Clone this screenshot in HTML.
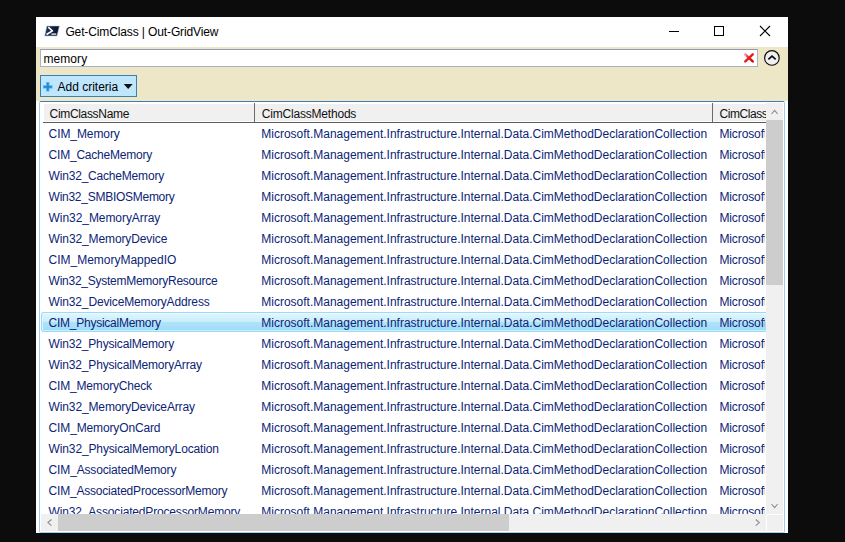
<!DOCTYPE html><html><head><meta charset="utf-8"><title>Get-CimClass | Out-GridView</title><style>
*{margin:0;padding:0;box-sizing:border-box}
html,body{width:845px;height:542px;overflow:hidden;background:#0c0c0c}
body{position:relative;font-family:"Liberation Sans",sans-serif;font-size:12px;color:#000}
.abs{position:absolute}
#win{left:36px;top:17px;width:752px;height:516px;background:#fff}
#title{left:29.4px;top:7px;height:16px;line-height:16px;font-size:12px;white-space:nowrap;color:#000}
#beige{left:0;top:30px;width:752px;height:54px;background:#ede7c7}
#search{left:4px;top:32px;width:718px;height:18px;background:#fff;border:1px solid #aeb3c6;border-top-color:#939bb4;border-bottom-color:#aab0c4}
#search span{position:absolute;left:2.4px;top:1px;line-height:16px;white-space:nowrap}
#addbtn{left:4px;top:58px;width:97px;height:22px;background:#bee6fd;border:1px solid #3c7fb1}
#addbtn span{position:absolute;left:16.5px;top:1px;line-height:20px;white-space:nowrap}
#lv{left:3px;top:84px;width:746px;height:432px;background:#fff;border:1px solid #a3cdee;border-top-color:#3f7db5;border-radius:2px;overflow:hidden}
#hdr{left:4px;top:2px;width:722px;height:17px;background:#f0f0f0}
#hline{left:3px;top:20px;width:723px;height:1px;background:#5d5d5d}
.sep{position:absolute;top:1px;width:1px;height:19px;background:#6b6b6b}
.ht{position:absolute;top:3px;line-height:19px;white-space:nowrap;color:#111}
.r{position:absolute;left:0;width:726px;overflow:hidden;height:21px;line-height:21px;white-space:nowrap;color:#0c2475}
.r span{position:absolute;top:1px}
.c1{left:8.6px}.c2{left:221.3px}.c3{left:679.4px;width:46px;overflow:hidden}
#clip{left:0;top:0;width:726px;height:412px;overflow:hidden}
#sel{left:1px;top:210px;width:800px;height:20px;border:1px solid #99dbf9;border-radius:2px;background:linear-gradient(#e2f6fe 0%,#c9edfc 50%,#b1e3fa 50%,#9ddbf9 100%);box-shadow:inset 0 1px 0 #ebfaff,inset 0 -1px 0 #cdeefb,inset 1px 0 0 #dcf4fd,inset -1px 0 0 #dcf4fd}
#vs{left:726px;top:1px;width:17px;height:411px;background:#f0f0f0}
#vthumb{left:726px;top:18px;width:17px;height:165px;background:#cdcdcd}
#hs{left:1px;top:412px;width:725px;height:17px;background:#f0f0f0}
#hthumb{left:18px;top:412px;width:451px;height:17px;background:#cdcdcd}
#corner{left:727px;top:413px;width:16px;height:16px;background:#f0f0f0}
svg{position:absolute;overflow:visible}
</style></head><body>
<div id="win" class="abs">
<svg style="left:8px;top:9px" width="16" height="10" viewBox="0 0 16 10"><defs><linearGradient id="psg" x1="0" y1="0" x2="1" y2="0"><stop offset="0" stop-color="#1f3558"/><stop offset="0.55" stop-color="#14223c"/><stop offset="1" stop-color="#0a1424"/></linearGradient></defs><polygon points="2.87,-0.05 15.4,-0.05 13.04,9.98 0.65,9.98" fill="url(#psg)" stroke="#bccdf0" stroke-opacity="0.8" stroke-width="0.7"/><polyline points="4.3,1.2 8.3,4.8 2.5,8.5" fill="none" stroke="#fff" stroke-width="1.6"/><line x1="7.4" y1="8.1" x2="12.3" y2="8.1" stroke="#fff" stroke-width="1.25"/></svg>
<div id="title" class="abs"><span id="t_title" style="letter-spacing:-0.121px">Get-CimClass | Out-GridView</span></div>
<svg style="left:633px;top:14px" width="11" height="1"><rect width="10" height="1" fill="#000"/></svg>
<svg style="left:678px;top:9px" width="10" height="10"><rect x="0.5" y="0.5" width="9" height="9" fill="none" stroke="#000" stroke-width="1"/></svg>
<svg style="left:724px;top:9px" width="10" height="10"><path d="M0,0 L10,10 M10,0 L0,10" stroke="#000" stroke-width="1.1" fill="none"/></svg>
<div id="beige" class="abs"></div>
<div id="search" class="abs"><span id="t_search" style="letter-spacing:0.093px">memory</span></div>
<svg style="left:707.8px;top:35.9px" width="10" height="10" viewBox="0 0 10 10"><defs><linearGradient id="rx" x1="0" y1="0" x2="1" y2="1"><stop offset="0" stop-color="#f19a9a"/><stop offset="0.45" stop-color="#e82020"/><stop offset="1" stop-color="#e00505"/></linearGradient></defs><path d="M1.3,1.3 L8.7,8.4 M8.7,1.3 L1.3,8.4" stroke="url(#rx)" stroke-width="2.5" fill="none" stroke-linecap="round"/></svg>
<svg style="left:728px;top:33px" width="16" height="16" viewBox="0 0 16 16"><circle cx="7.9" cy="7.9" r="7.3" fill="#efefef" stroke="#0a0a0a" stroke-width="1.15"/><polyline points="4.4,9.4 8,6.1 11.7,9.4" fill="none" stroke="#0a0a0a" stroke-width="1.65"/></svg>
<div id="addbtn" class="abs"><svg style="left:1.7px;top:5.7px" width="9.6" height="9.6" viewBox="0 0 9.6 9.6"><path d="M4.8,0.1 V9.5 M0.1,4.8 H9.5" stroke="#56b0ec" stroke-width="3.2" fill="none"/><path d="M4.8,0.9 V8.7 M0.9,4.8 H8.7" stroke="#2487d6" stroke-width="1.7" fill="none"/></svg><span id="t_add" style="letter-spacing:-0.000px">Add criteria</span><svg style="left:82.2px;top:7.9px" width="10.4" height="5.4" viewBox="0 0 10 6"><polygon points="0,0 10,0 5,5.5" fill="#111"/></svg></div>
<div id="lv" class="abs">
<div id="hdr" class="abs"></div><div id="hline" class="abs"></div>
<div class="sep" style="left:214px"></div><div class="sep" style="left:672px"></div>
<div id="clip" class="abs">
<span class="ht" id="h1" style="left:9.6px;letter-spacing:-0.329px">CimClassName</span>
<span class="ht" id="h2" style="left:221.7px;letter-spacing:-0.191px">CimClassMethods</span>
<span class="ht" id="h3" style="left:679.6px;letter-spacing:-0.450px">CimClassProperties</span>
<div id="sel" class="abs"></div>
<div class="r" style="top:21px"><span class="c1" id="n0" style="letter-spacing:-0.082px">CIM_Memory</span><span class="c2 m" style="letter-spacing:-0.005px">Microsoft.Management.Infrastructure.Internal.Data.CimMethodDeclarationCollection</span><span class="c3 p" style="letter-spacing:-0.100px">Microsoft.Management.Infrastructure.Internal.Data.CimPropertyDeclarationCollection</span></div>
<div class="r" style="top:42px"><span class="c1" id="n1" style="letter-spacing:-0.214px">CIM_CacheMemory</span><span class="c2 m" style="letter-spacing:-0.005px">Microsoft.Management.Infrastructure.Internal.Data.CimMethodDeclarationCollection</span><span class="c3 p" style="letter-spacing:-0.100px">Microsoft.Management.Infrastructure.Internal.Data.CimPropertyDeclarationCollection</span></div>
<div class="r" style="top:63px"><span class="c1" id="n2" style="letter-spacing:-0.195px">Win32_CacheMemory</span><span class="c2 m" style="letter-spacing:-0.005px">Microsoft.Management.Infrastructure.Internal.Data.CimMethodDeclarationCollection</span><span class="c3 p" style="letter-spacing:-0.100px">Microsoft.Management.Infrastructure.Internal.Data.CimPropertyDeclarationCollection</span></div>
<div class="r" style="top:84px"><span class="c1" id="n3" style="letter-spacing:-0.267px">Win32_SMBIOSMemory</span><span class="c2 m" style="letter-spacing:-0.005px">Microsoft.Management.Infrastructure.Internal.Data.CimMethodDeclarationCollection</span><span class="c3 p" style="letter-spacing:-0.100px">Microsoft.Management.Infrastructure.Internal.Data.CimPropertyDeclarationCollection</span></div>
<div class="r" style="top:105px"><span class="c1" id="n4" style="letter-spacing:-0.065px">Win32_MemoryArray</span><span class="c2 m" style="letter-spacing:-0.005px">Microsoft.Management.Infrastructure.Internal.Data.CimMethodDeclarationCollection</span><span class="c3 p" style="letter-spacing:-0.100px">Microsoft.Management.Infrastructure.Internal.Data.CimPropertyDeclarationCollection</span></div>
<div class="r" style="top:126px"><span class="c1" id="n5" style="letter-spacing:-0.117px">Win32_MemoryDevice</span><span class="c2 m" style="letter-spacing:-0.005px">Microsoft.Management.Infrastructure.Internal.Data.CimMethodDeclarationCollection</span><span class="c3 p" style="letter-spacing:-0.100px">Microsoft.Management.Infrastructure.Internal.Data.CimPropertyDeclarationCollection</span></div>
<div class="r" style="top:147px"><span class="c1" id="n6" style="letter-spacing:-0.019px">CIM_MemoryMappedIO</span><span class="c2 m" style="letter-spacing:-0.005px">Microsoft.Management.Infrastructure.Internal.Data.CimMethodDeclarationCollection</span><span class="c3 p" style="letter-spacing:-0.100px">Microsoft.Management.Infrastructure.Internal.Data.CimPropertyDeclarationCollection</span></div>
<div class="r" style="top:168px"><span class="c1" id="n7" style="letter-spacing:-0.257px">Win32_SystemMemoryResource</span><span class="c2 m" style="letter-spacing:-0.005px">Microsoft.Management.Infrastructure.Internal.Data.CimMethodDeclarationCollection</span><span class="c3 p" style="letter-spacing:-0.100px">Microsoft.Management.Infrastructure.Internal.Data.CimPropertyDeclarationCollection</span></div>
<div class="r" style="top:189px"><span class="c1" id="n8" style="letter-spacing:-0.149px">Win32_DeviceMemoryAddress</span><span class="c2 m" style="letter-spacing:-0.005px">Microsoft.Management.Infrastructure.Internal.Data.CimMethodDeclarationCollection</span><span class="c3 p" style="letter-spacing:-0.100px">Microsoft.Management.Infrastructure.Internal.Data.CimPropertyDeclarationCollection</span></div>
<div class="r" style="top:210px"><span class="c1" id="n9" style="letter-spacing:-0.250px">CIM_PhysicalMemory</span><span class="c2 m" style="letter-spacing:-0.005px">Microsoft.Management.Infrastructure.Internal.Data.CimMethodDeclarationCollection</span><span class="c3 p" style="letter-spacing:-0.100px">Microsoft.Management.Infrastructure.Internal.Data.CimPropertyDeclarationCollection</span></div>
<div class="r" style="top:231px"><span class="c1" id="n10" style="letter-spacing:-0.166px">Win32_PhysicalMemory</span><span class="c2 m" style="letter-spacing:-0.005px">Microsoft.Management.Infrastructure.Internal.Data.CimMethodDeclarationCollection</span><span class="c3 p" style="letter-spacing:-0.100px">Microsoft.Management.Infrastructure.Internal.Data.CimPropertyDeclarationCollection</span></div>
<div class="r" style="top:252px"><span class="c1" id="n11" style="letter-spacing:-0.164px">Win32_PhysicalMemoryArray</span><span class="c2 m" style="letter-spacing:-0.005px">Microsoft.Management.Infrastructure.Internal.Data.CimMethodDeclarationCollection</span><span class="c3 p" style="letter-spacing:-0.100px">Microsoft.Management.Infrastructure.Internal.Data.CimPropertyDeclarationCollection</span></div>
<div class="r" style="top:273px"><span class="c1" id="n12" style="letter-spacing:-0.182px">CIM_MemoryCheck</span><span class="c2 m" style="letter-spacing:-0.005px">Microsoft.Management.Infrastructure.Internal.Data.CimMethodDeclarationCollection</span><span class="c3 p" style="letter-spacing:-0.100px">Microsoft.Management.Infrastructure.Internal.Data.CimPropertyDeclarationCollection</span></div>
<div class="r" style="top:294px"><span class="c1" id="n13" style="letter-spacing:-0.134px">Win32_MemoryDeviceArray</span><span class="c2 m" style="letter-spacing:-0.005px">Microsoft.Management.Infrastructure.Internal.Data.CimMethodDeclarationCollection</span><span class="c3 p" style="letter-spacing:-0.100px">Microsoft.Management.Infrastructure.Internal.Data.CimPropertyDeclarationCollection</span></div>
<div class="r" style="top:315px"><span class="c1" id="n14" style="letter-spacing:-0.139px">CIM_MemoryOnCard</span><span class="c2 m" style="letter-spacing:-0.005px">Microsoft.Management.Infrastructure.Internal.Data.CimMethodDeclarationCollection</span><span class="c3 p" style="letter-spacing:-0.100px">Microsoft.Management.Infrastructure.Internal.Data.CimPropertyDeclarationCollection</span></div>
<div class="r" style="top:336px"><span class="c1" id="n15" style="letter-spacing:-0.135px">Win32_PhysicalMemoryLocation</span><span class="c2 m" style="letter-spacing:-0.005px">Microsoft.Management.Infrastructure.Internal.Data.CimMethodDeclarationCollection</span><span class="c3 p" style="letter-spacing:-0.100px">Microsoft.Management.Infrastructure.Internal.Data.CimPropertyDeclarationCollection</span></div>
<div class="r" style="top:357px"><span class="c1" id="n16" style="letter-spacing:-0.151px">CIM_AssociatedMemory</span><span class="c2 m" style="letter-spacing:-0.005px">Microsoft.Management.Infrastructure.Internal.Data.CimMethodDeclarationCollection</span><span class="c3 p" style="letter-spacing:-0.100px">Microsoft.Management.Infrastructure.Internal.Data.CimPropertyDeclarationCollection</span></div>
<div class="r" style="top:378px"><span class="c1" id="n17" style="letter-spacing:-0.205px">CIM_AssociatedProcessorMemory</span><span class="c2 m" style="letter-spacing:-0.005px">Microsoft.Management.Infrastructure.Internal.Data.CimMethodDeclarationCollection</span><span class="c3 p" style="letter-spacing:-0.100px">Microsoft.Management.Infrastructure.Internal.Data.CimPropertyDeclarationCollection</span></div>
<div class="r" style="top:399px"><span class="c1" id="n18" style="letter-spacing:-0.166px">Win32_AssociatedProcessorMemory</span><span class="c2 m" style="letter-spacing:-0.005px">Microsoft.Management.Infrastructure.Internal.Data.CimMethodDeclarationCollection</span><span class="c3 p" style="letter-spacing:-0.100px">Microsoft.Management.Infrastructure.Internal.Data.CimPropertyDeclarationCollection</span></div>
</div>
<div id="hs" class="abs"></div><div id="hthumb" class="abs"></div>
<div id="vs" class="abs"></div><div id="vthumb" class="abs"></div><div id="corner" class="abs"></div>
<svg style="left:731px;top:7px" width="8" height="6" viewBox="0 0 8 6"><polyline points="0.5,5.0 3.6,1.3 6.7,5.0" fill="none" stroke="#8c8c8c" stroke-width="1.1"/></svg>
<svg style="left:731px;top:401px" width="8" height="6" viewBox="0 0 8 6"><polyline points="0.5,1.0 3.6,4.7 6.7,1.0" fill="none" stroke="#8c8c8c" stroke-width="1.1"/></svg>
<svg style="left:7px;top:417px" width="6" height="8" viewBox="0 0 6 8"><polyline points="4.5,0.5 0.9,3.6 4.5,6.7" fill="none" stroke="#8c8c8c" stroke-width="1.1"/></svg>
<svg style="left:715px;top:417px" width="6" height="8" viewBox="0 0 6 8"><polyline points="0.7,0.5 4.3,3.6 0.7,6.7" fill="none" stroke="#8c8c8c" stroke-width="1.1"/></svg>
</div>
</div></body></html>
